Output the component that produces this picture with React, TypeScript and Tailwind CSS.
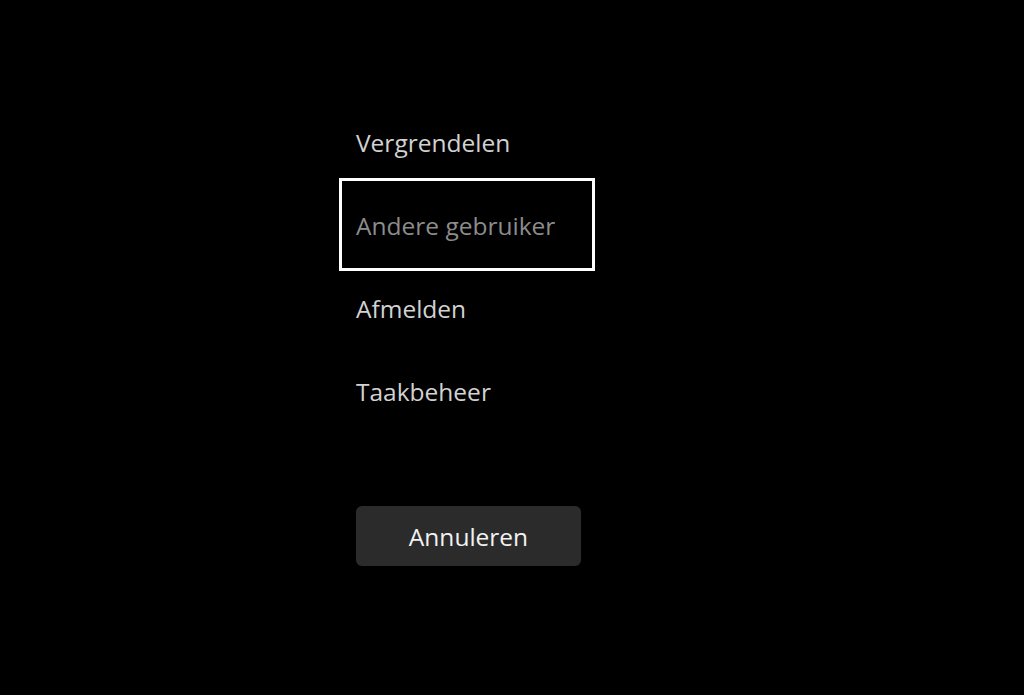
export default function App() {
  const items = [
    { label: 'Vergrendelen', focused: false },
    { label: 'Andere gebruiker', focused: true },
    { label: 'Afmelden', focused: false },
    { label: 'Taakbeheer', focused: false },
  ];

  return (
    <div
      className="h-[695px] w-[1024px] bg-black"
      style={{ fontFamily: '"Open Sans", "Noto Sans", sans-serif' }}
    >
      <div className="flex flex-col pl-[344px] pt-[100px]">
        {items.map((item) => (
          <div
            key={item.label}
            className={
              'flex h-[83px] w-[246px] items-center pt-[3px] pl-[12px] text-[24.5px] ' +
              (item.focused
                ? 'text-[#8c8c8c] outline-[3px] outline-offset-[2px] outline-white outline-solid'
                : 'text-[#d2d2d2]')
            }
          >
            {item.label}
          </div>
        ))}

        {/* Annuleren */}
        <button
          type="button"
          className="mt-[74px] ml-[12px] flex h-[60px] w-[225px] items-center justify-center rounded-[6px] bg-[#2b2b2b] pt-[3px] text-[24.5px] text-[#f2f2f2]"
        >
          Annuleren
        </button>
      </div>
    </div>
  );
}
